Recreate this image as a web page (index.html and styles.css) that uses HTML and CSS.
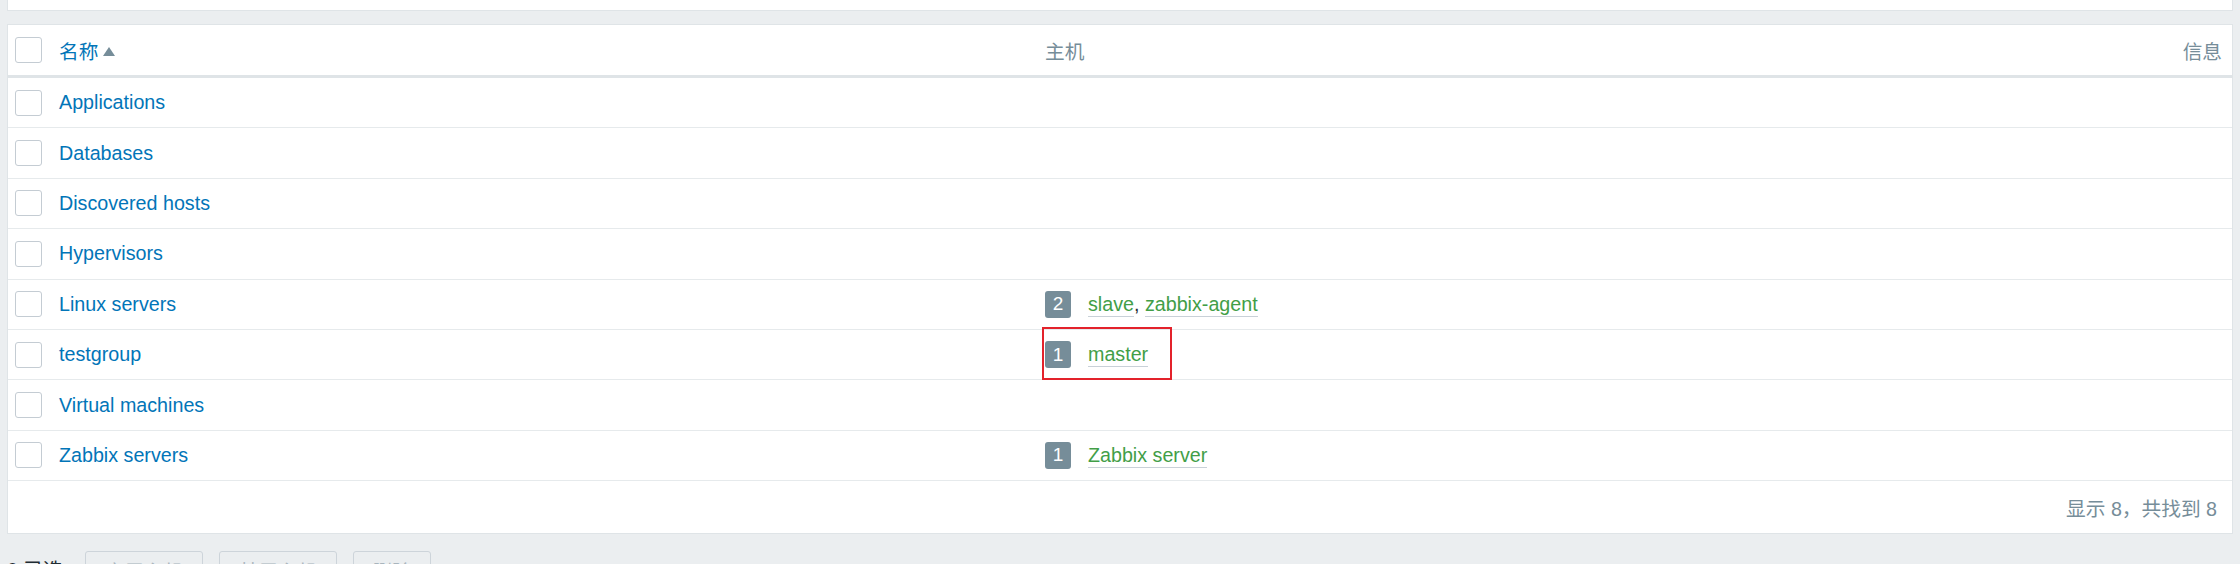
FILE: index.html
```html
<!DOCTYPE html>
<html lang="zh-CN">
<head>
<meta charset="utf-8">
<title>主机群组</title>
<link rel="stylesheet" href="styles.css">
</head>
<body>
<div class="wrap">
  <div class="top-panel"></div>
  <div class="list-panel">
    <div class="row head">
      <div class="cell cb"><span class="checkbox"></span></div>
      <div class="cell name"><a class="sort">名称</a><span class="arrow"></span></div>
      <div class="cell hosts th">主机</div>
      <div class="cell info th">信息</div>
    </div>
    <div class="row">
      <div class="cell cb"><span class="checkbox"></span></div>
      <div class="cell name"><a class="link">Applications</a></div>
      <div class="cell hosts"></div>
      <div class="cell info"></div>
    </div>
    <div class="row">
      <div class="cell cb"><span class="checkbox"></span></div>
      <div class="cell name"><a class="link">Databases</a></div>
      <div class="cell hosts"></div>
      <div class="cell info"></div>
    </div>
    <div class="row">
      <div class="cell cb"><span class="checkbox"></span></div>
      <div class="cell name"><a class="link">Discovered hosts</a></div>
      <div class="cell hosts"></div>
      <div class="cell info"></div>
    </div>
    <div class="row">
      <div class="cell cb"><span class="checkbox"></span></div>
      <div class="cell name"><a class="link">Hypervisors</a></div>
      <div class="cell hosts"></div>
      <div class="cell info"></div>
    </div>
    <div class="row">
      <div class="cell cb"><span class="checkbox"></span></div>
      <div class="cell name"><a class="link">Linux servers</a></div>
      <div class="cell hosts"><span class="badge">2</span><a class="host">slave</a><span class="sep">, </span><a class="host">zabbix-agent</a></div>
      <div class="cell info"></div>
    </div>
    <div class="row">
      <div class="cell cb"><span class="checkbox"></span></div>
      <div class="cell name"><a class="link">testgroup</a></div>
      <div class="cell hosts marked"><span class="badge">1</span><a class="host">master</a><span class="highlight"></span></div>
      <div class="cell info"></div>
    </div>
    <div class="row">
      <div class="cell cb"><span class="checkbox"></span></div>
      <div class="cell name"><a class="link">Virtual machines</a></div>
      <div class="cell hosts"></div>
      <div class="cell info"></div>
    </div>
    <div class="row">
      <div class="cell cb"><span class="checkbox"></span></div>
      <div class="cell name"><a class="link">Zabbix servers</a></div>
      <div class="cell hosts"><span class="badge">1</span><a class="host">Zabbix server</a></div>
      <div class="cell info"></div>
    </div>
    <div class="footer">显示 8，共找到 8</div>
  </div>
  <div class="actions">
    <span class="selected">0 已选</span>
    <button class="btn b-wide" disabled>启用主机</button>
    <button class="btn b-wide" disabled>禁用主机</button>
    <button class="btn b-narrow" disabled>删除</button>
  </div>
</div>
</body>
</html>
```

FILE: styles.css
```css
* { box-sizing: border-box; }
html, body {
  margin: 0;
  padding: 0;
  background: #ebeef0;
  font-family: "Liberation Sans", "Noto Sans CJK SC", sans-serif;
  font-size: 19.7px;
  color: #1f2c33;
  overflow: hidden;
  height: 564px;
}
.wrap {
  padding: 0 7px;
}
.top-panel {
  height: 11px;
  background: #fff;
  border: 1px solid #dfe4e7;
  border-top: none;
}
.list-panel {
  margin-top: 13px;
  background: #fff;
  border: 1px solid #dfe4e7;
}
.row {
  display: grid;
  grid-template-columns: 51px 986px 1fr auto;
  align-items: center;
  height: 50.4px;
  border-bottom: 1px solid #e6eaec;
  padding-right: 10px;
}
.row.head {
  height: 53px;
  border-bottom: 3px solid #dfe4e7;
}
.cell {
  display: flex;
  align-items: center;
  white-space: nowrap;
}
.cb {
  padding-left: 7px;
}
.checkbox {
  display: block;
  width: 27px;
  height: 26px;
  border: 1px solid #c4ccd3;
  border-radius: 3px;
  background: #fff;
}
.link, .sort {
  color: #0275b8;
  text-decoration: none;
}
.arrow {
  width: 0;
  height: 0;
  margin-left: 5px;
  margin-top: 3px;
  border-left: 6px solid transparent;
  border-right: 6px solid transparent;
  border-bottom: 9px solid #768d99;
}
.th {
  color: #768d99;
}
.info {
  justify-content: flex-end;
}
.hosts {
  position: relative;
  align-self: stretch;
}
.badge {
  display: inline-flex;
  align-items: center;
  justify-content: center;
  width: 26px;
  height: 27px;
  background: #768d99;
  color: #fff;
  border-radius: 3px;
  margin-right: 17px;
  font-size: 19px;
}
.host {
  color: #429e47;
  text-decoration: none;
  border-bottom: 1px solid #c9d1d8;
  line-height: 23px;
  padding-top: 1px;
}
.sep {
  white-space: pre;
}
.highlight {
  position: absolute;
  left: -3px;
  top: -3px;
  width: 130px;
  height: 53px;
  border: 2px solid #e3222b;
}
.footer {
  height: 52px;
  display: flex;
  align-items: center;
  justify-content: flex-end;
  padding-right: 15px;
  color: #768d99;
}
.actions {
  display: flex;
  align-items: flex-start;
  gap: 16px;
  margin-top: 17px;
}
.selected {
  width: 62px;
  padding-top: 3px;
  color: #1f2c33;
}
.btn {
  height: 38px;
  border: 1px solid #cdd4da;
  border-radius: 3px;
  background: #ebeef0;
  color: #a9b5bd;
  font-family: inherit;
  font-size: 19.7px;
}
.b-wide { width: 118px; }
.b-narrow { width: 78px; }
```
